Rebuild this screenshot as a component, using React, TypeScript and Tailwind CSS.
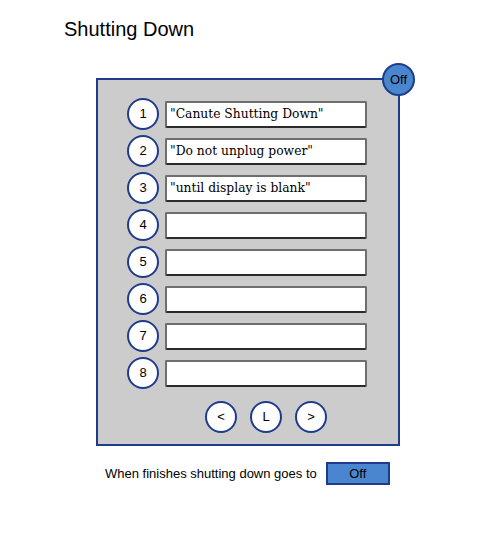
import React from "react";

const rows = [
  '"Canute Shutting Down"',
  '"Do not unplug power"',
  '"until display is blank"',
  "",
  "",
  "",
  "",
  "",
];

function Circle({ label }: { label: string }) {
  return (
    <div className="w-[32px] h-[32px] rounded-full border-2 border-[#1f3b8c] bg-white flex items-center justify-center text-[13px] text-black shrink-0">
      {label}
    </div>
  );
}

export default function App() {
  return (
    <div
      className="w-[500px] h-[550px] bg-white flex flex-col"
      style={{ fontFamily: '"Liberation Sans", Arial, sans-serif' }}
    >
      <div className="pl-[64px] pt-[17px] text-[20px] leading-[24px] text-black">Shutting Down</div>
      <div className="relative ml-[96px] mt-[37px] w-[304px] h-[368px] border-2 border-[#1f3b8c] bg-[#cccccc] pt-[18px] pl-[29px]">
        <div className="absolute right-[-17px] top-[-17px] w-[33px] h-[33px] rounded-full border-2 border-[#1f3b8c] bg-[#4a86cf] flex items-center justify-center text-[13px] text-black">
          Off
        </div>
        <div className="flex flex-col gap-[5px]">
          {rows.map((t, i) => (
            <div key={i} className="flex items-center">
              <Circle label={String(i + 1)} />
              <div
                className="ml-[6px] w-[202px] h-[27px] bg-white border-2 border-[#6e6e6e] border-b-[#2a2a2a] rounded-[2px] flex items-center pl-[3px] text-[12.3px] text-black"
                style={{ fontFamily: '"DejaVu Serif", serif' }}
              >
                {t}
              </div>
            </div>
          ))}
        </div>
        <div className="flex gap-[13px] mt-[12px] pl-[78px]">
          <Circle label="<" />
          <Circle label="L" />
          <Circle label=">" />
        </div>
      </div>
      <div className="flex items-center ml-[105px] mt-[16px] gap-[9px]">
        <span className="text-[13px] text-black">When finishes shutting down goes to</span>
        <div className="w-[64px] h-[23px] border-2 border-[#1f3b8c] bg-[#4a86cf] flex items-center justify-center text-[13px] text-black">
          Off
        </div>
      </div>
    </div>
  );
}
